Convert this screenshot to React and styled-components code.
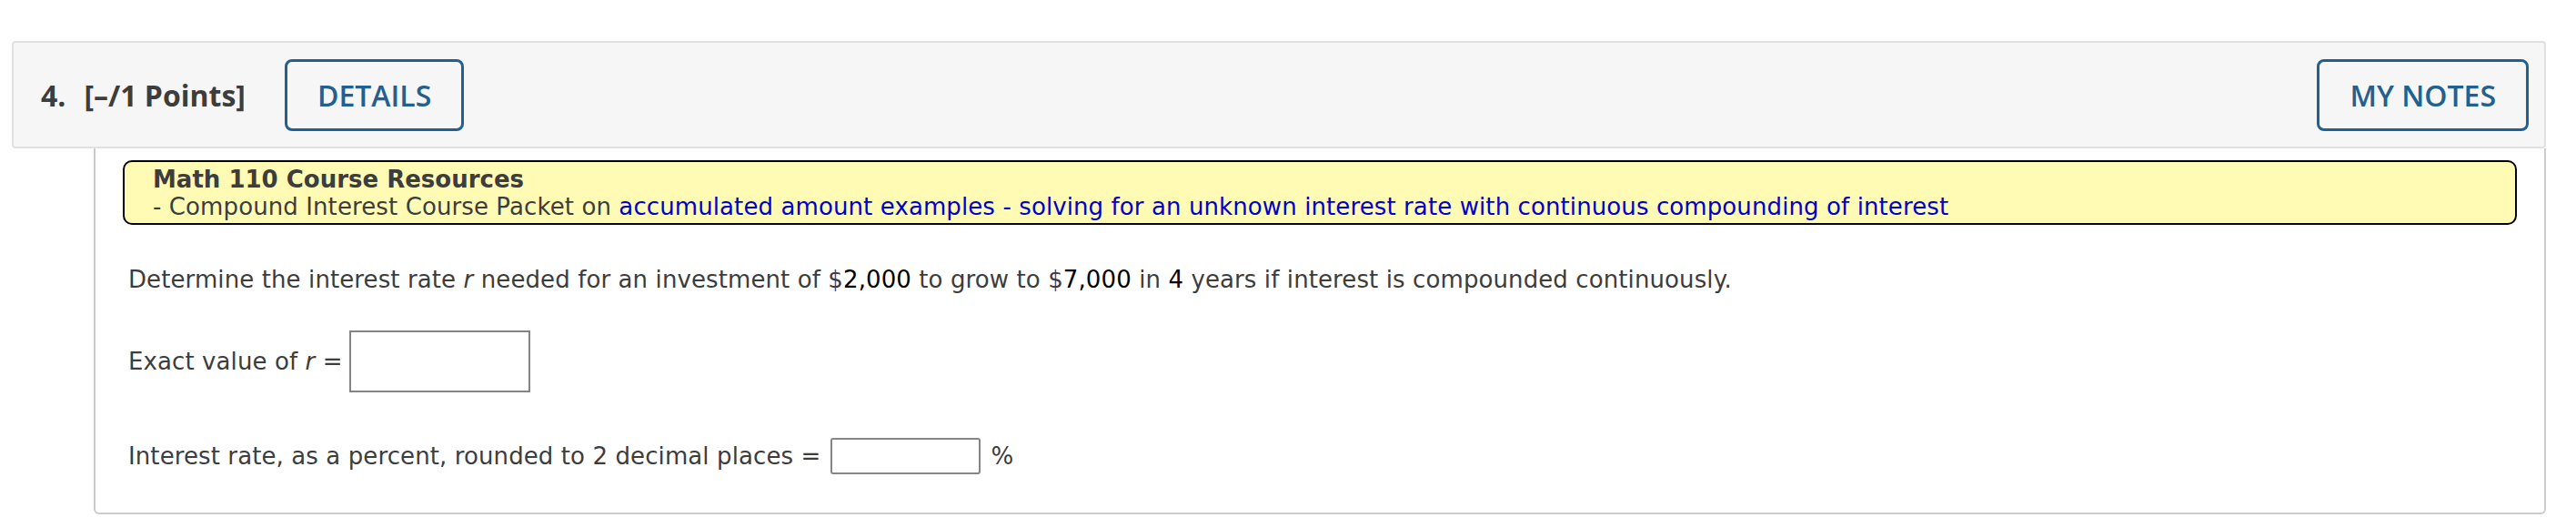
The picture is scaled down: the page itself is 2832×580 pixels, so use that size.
import React from "react"
import styled, { createGlobalStyle } from "styled-components"

const GlobalStyle = createGlobalStyle`
  body {
    margin: 0;
    background: #fff;
  }
`

const Page = styled.div`
  padding: 45px 33px 0 13px;
  width: 2786px;
`

const QuestionHeader = styled.div`
  display: flex;
  align-items: center;
  box-sizing: border-box;
  height: 118px;
  padding: 0 17px 0 30px;
  background-color: #f6f6f6;
  border: 2px solid #e0e0e0;
  border-radius: 4px;
  font-family: "Open Sans", sans-serif;
`

const QuestionNumber = styled.span`
  font-size: 32px;
  font-weight: 700;
  color: #3d3d3d;
  margin-right: 20px;
`

const Points = styled.span`
  font-size: 32px;
  font-weight: 700;
  color: #3d3d3d;
  margin-right: 43px;
`

const HeaderButton = styled.button`
  display: flex;
  align-items: center;
  box-sizing: border-box;
  height: 79px;
  padding: 0 33px;
  margin-left: ${props => (props.right ? "auto" : "0")};
  background: transparent;
  border: 3px solid #23608f;
  border-radius: 8px;
  font-family: "Open Sans", sans-serif;
  font-size: 32px;
  font-weight: 600;
  color: #23608f;
`

const QuestionBody = styled.div`
  margin-left: 90px;
  padding: 13px 30px 42px 30px;
  border: 2px solid #cccccc;
  border-top: none;
  border-radius: 0 0 6px 6px;
  font-family: "DejaVu Sans", Verdana, sans-serif;
  font-size: 26px;
  letter-spacing: 0.1px;
  line-height: 30px;
  color: #3d3d3d;
`

const Resources = styled.div`
  padding: 4px 31px 3px 31px;
  background-color: #fffbb5;
  border: 2px solid #000;
  border-radius: 10px;
`

const ResourcesTitle = styled.div`
  font-weight: 700;
  letter-spacing: 0;
`

const ResourceLink = styled.a`
  color: #0000cc;
  text-decoration: none;
`

const Prompt = styled.p`
  margin: 45px 6px 0 6px;
`

const Num = styled.span`
  color: #000;
`

const Var = styled.i`
  font-style: italic;
`

const AnswerRow = styled.div`
  display: flex;
  align-items: center;
  margin: ${props => props.top}px 6px 0 6px;
`

const AnswerBox = styled.input`
  box-sizing: border-box;
  width: ${props => props.w}px;
  height: ${props => props.h}px;
  margin: 0 ${props => props.after}px 0 ${props => props.before}px;
  border: 2px solid #858585;
  border-radius: ${props => props.radius}px;
  background: #fff;
  font-family: inherit;
  font-size: 26px;
`

export default function App() {
  return (
    <Page>
      <GlobalStyle />
      <QuestionHeader>
        <QuestionNumber>4.</QuestionNumber>
        <Points>[–/1 Points]</Points>
        <HeaderButton>DETAILS</HeaderButton>
        <HeaderButton right>MY NOTES</HeaderButton>
      </QuestionHeader>

      <QuestionBody>
        <Resources>
          <ResourcesTitle>Math 110 Course Resources</ResourcesTitle>
          <div>
            - Compound Interest Course Packet on{" "}
            <ResourceLink href="#">
              accumulated amount examples - solving for an unknown interest rate with continuous compounding of interest
            </ResourceLink>
          </div>
        </Resources>

        <Prompt>
          Determine the interest rate <Var>r</Var> needed for an investment of $<Num>2,000</Num> to grow to $
          <Num>7,000</Num> in <Num>4</Num> years if interest is compounded continuously.
        </Prompt>

        <AnswerRow top={41}>
          <span>
            Exact value of <Var>r</Var> =
          </span>
          <AnswerBox w={199} h={68} radius={0} before={7} after={0} />
        </AnswerRow>

        <AnswerRow top={50}>
          <span>Interest rate, as a percent, rounded to 2 decimal places =</span>
          <AnswerBox w={165} h={40} radius={3} before={11} after={11} />
          <span>%</span>
        </AnswerRow>
      </QuestionBody>
    </Page>
  )
}
